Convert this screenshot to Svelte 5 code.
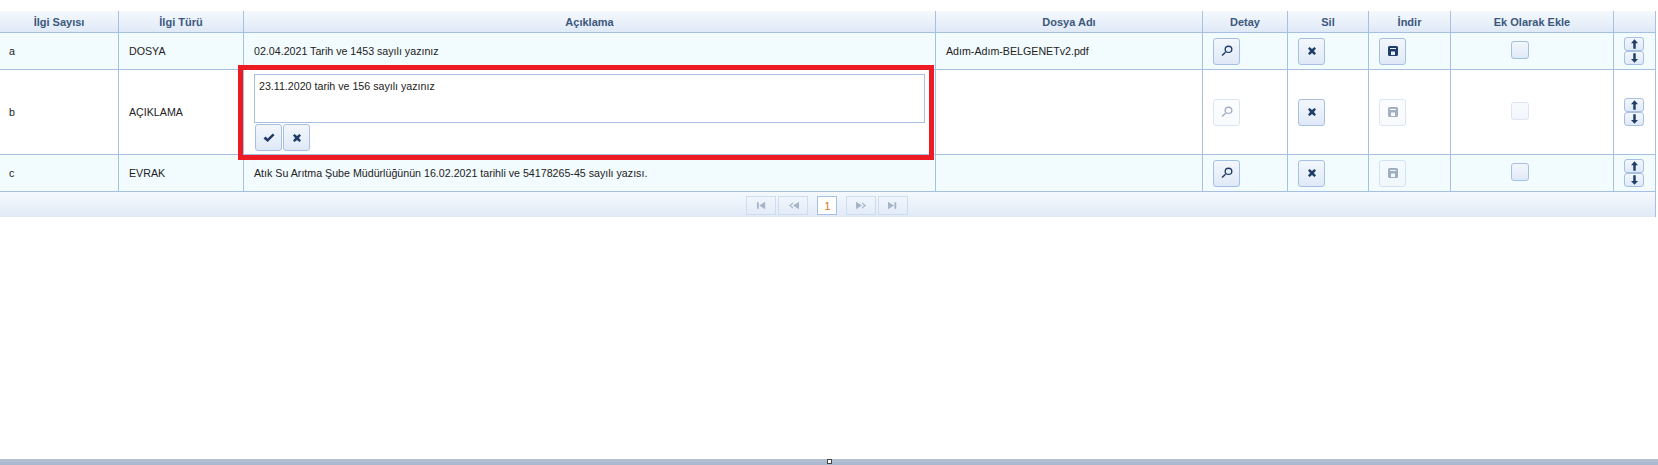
<script lang="ts">
  // grid rows; disabled flags follow what the record allows
  type Row = { no: string; type: string; desc: string; file: string; editing?: boolean; detail: boolean; download: boolean; attach: boolean };

  const columns = [
    { label: 'İlgi Sayısı', cls: 'c-no' },
    { label: 'İlgi Türü', cls: 'c-type' },
    { label: 'Açıklama', cls: 'c-desc' },
    { label: 'Dosya Adı', cls: 'c-file' },
    { label: 'Detay', cls: 'c-detail' },
    { label: 'Sil', cls: 'c-del' },
    { label: 'İndir', cls: 'c-down' },
    { label: 'Ek Olarak Ekle', cls: 'c-attach' },
    { label: '', cls: 'c-move' }
  ];

  const rows: Row[] = [
    { no: 'a', type: 'DOSYA', desc: '02.04.2021 Tarih ve 1453 sayılı yazınız', file: 'Adım-Adım-BELGENETv2.pdf', detail: true, download: true, attach: true },
    { no: 'b', type: 'AÇIKLAMA', desc: '23.11.2020 tarih ve 156 sayılı yazınız', file: '', editing: true, detail: false, download: false, attach: false },
    { no: 'c', type: 'EVRAK', desc: 'Atık Su Arıtma Şube Müdürlüğünün 16.02.2021 tarihli ve 54178265-45 sayılı yazısı.', file: '', detail: true, download: false, attach: true }
  ];

  const icons: Record<string, string> = {
    search: 'M7.5 0.5a4 3.8 0 1 0 0 7.6a4 3.8 0 0 0 0-7.6zM7.5 2a2.6 2.4 0 1 1 0 4.8a2.6 2.4 0 0 1 0-4.8zM4 6.7L5 7.8L1.6 11L0.5 10z',
    cross: 'M1.6 0L4 2L6.4 0L8 1.6L5.9 4L8 6.4L6.4 8L4 6L1.6 8L0 6.4L2.1 4L0 1.6z',
    save: 'M1.5 0h7a1.5 1.5 0 0 1 1.5 1.5v7a1.5 1.5 0 0 1-1.5 1.5h-7a1.5 1.5 0 0 1-1.5-1.5v-7a1.5 1.5 0 0 1 1.5-1.5zM2 2v1h6v-1zM3 5.5v3.5h4v-3.5z',
    check: 'M0.5 6.5L2.5 4.6L4.6 6.6L9.8 1.5L11.5 3.2L4.6 10z',
    up: 'M4 0L8 4.5H5.4V11H2.6V4.5H0z',
    down: 'M2.6 0H5.4V6.5H8L4 11L0 6.5H2.6z',
    first: 'M1 2.5h2v7H1zM3.5 6L10 2V10z',
    prev: 'M5.5 2.5L1 6L5.5 9.5V8L3 6L5.5 4zM5.5 6L12 2V10z',
    next: 'M0 2L6.5 6L0 10zM6.5 2.5L11 6L6.5 9.5V8L9 6L6.5 4z',
    last: 'M0 2L6.5 6L0 10zM7 2.5H9V9.5H7z'
  };
</script>

<div class="page">
  <table class="grid">
    <thead>
      <tr>
        {#each columns as col}
          <th class={col.cls}>{col.label}</th>
        {/each}
      </tr>
    </thead>
    <tbody>
      {#each rows as row, i}
        <tr class:odd={i % 2 === 0} class:tall={row.editing}>
          <td class="first">{row.no}</td>
          <td>{row.type}</td>
          <td class="desc">
            {#if row.editing}
              <div class="edit">
                <textarea readonly value={row.desc}></textarea>
                <div class="edit-actions">
                  <button class="btn"><svg viewBox="0 0 12 12" class="ico"><path d={icons.check} /></svg></button>
                  <button class="btn"><svg viewBox="0 0 8 8" class="ico small"><path d={icons.cross} /></svg></button>
                </div>
              </div>
              <div class="highlight"></div>
            {:else}
              {row.desc}
            {/if}
          </td>
          <td>{row.file}</td>
          <td><button class="btn" class:off={!row.detail}><svg viewBox="0 0 12 12" class="ico"><path fill-rule="evenodd" d={icons.search} /></svg></button></td>
          <td><button class="btn"><svg viewBox="0 0 8 8" class="ico small"><path d={icons.cross} /></svg></button></td>
          <td><button class="btn" class:off={!row.download}><svg viewBox="0 0 10 10" class="ico floppy"><path fill-rule="evenodd" d={icons.save} /></svg></button></td>
          <td class="attach"><span class="box" class:off={!row.attach}></span></td>
          <td>
            <div class="move">
              <button class="arrow"><svg viewBox="0 0 8 11" class="arr"><path d={icons.up} /></svg></button>
              <button class="arrow"><svg viewBox="0 0 8 11" class="arr"><path d={icons.down} /></svg></button>
            </div>
          </td>
        </tr>
      {/each}
    </tbody>
  </table>

  <div class="pager">
    <span class="pg"><svg viewBox="0 0 12 12"><path d={icons.first} /></svg></span>
    <span class="pg"><svg viewBox="0 0 12 12"><path d={icons.prev} /></svg></span>
    <span class="num">1</span>
    <span class="pg"><svg viewBox="0 0 12 12"><path d={icons.next} /></svg></span>
    <span class="pg"><svg viewBox="0 0 12 12"><path d={icons.last} /></svg></span>
  </div>

  <div class="splitter"><span class="handle"></span></div>
</div>

<style>
  :global(body) { background: #fff; }
  .page {
    height: 465px;
    display: flex;
    flex-direction: column;
    padding-top: 11px;
    box-sizing: border-box;
    overflow: hidden;
    font-family: "Liberation Sans", Arial, sans-serif;
    font-size: 10.67px;
    color: #222;
  }
  .grid {
    width: 1656px;
    table-layout: fixed;
    border-collapse: separate;
    border-spacing: 0;
  }
  .c-no { width: 119px; }
  .c-type { width: 125px; }
  .c-desc { width: 692px; }
  .c-file { width: 267px; }
  .c-detail { width: 85px; }
  .c-del { width: 81px; }
  .c-down { width: 82px; }
  .c-attach { width: 163px; }
  .c-move { width: 42px; }

  th, td {
    box-sizing: border-box;
    border-right: 1px solid #a6bfe2;
    border-bottom: 1px solid #a6bfe2;
    padding: 0 0 0 10px;
  }
  th {
    height: 22px;
    padding: 0;
    text-align: center;
    font-size: 11px;
    font-weight: bold;
    color: #3b587c;
    background: linear-gradient(#f5f9fd, #dfe9f7);
  }
  td { height: 37px; background: #fff; }
  tr.tall td { height: 85px; }
  tr.odd td { background: #f2fbfe; }
  td.first { padding-left: 9px; }
  td.desc { padding-left: 10px; position: relative; }
  tr.tall td.desc { vertical-align: top; padding-top: 4px; }

  .btn {
    width: 27px;
    height: 27px;
    padding: 0;
    display: flex;
    align-items: center;
    justify-content: center;
    border: 1px solid #a6bfe2;
    border-radius: 3px;
    background: linear-gradient(#f3f7fc, #dfe9f7);
  }
  .ico { width: 12px; height: 12px; fill: #1f3d66; }
  .ico.small { width: 8px; height: 8px; }
  .ico.floppy { width: 10px; height: 10px; }
  .btn.off { opacity: 0.4; background: linear-gradient(#f9fbfe, #eff4fb); }

  .attach { padding-left: 60px; }
  .box {
    display: block;
    width: 18px;
    height: 18px;
    box-sizing: border-box;
    margin-bottom: 2px;
    border: 1px solid #a6bfe2;
    border-radius: 3px;
    background: linear-gradient(#f3f7fc, #dfe9f7);
  }
  .box.off { opacity: 0.4; }

  .move { display: flex; flex-direction: column; }
  .arrow {
    width: 20px;
    height: 14px;
    padding: 0;
    display: flex;
    align-items: center;
    justify-content: center;
    border: 1px solid #a6bfe2;
    border-radius: 3px;
    background: linear-gradient(#f3f7fc, #dfe9f7);
  }
  .arr { width: 7px; height: 10px; fill: #1f3d66; }

  .edit { display: flex; flex-direction: column; gap: 1px; }
  textarea {
    width: 671px;
    height: 49px;
    box-sizing: border-box;
    padding: 5px 4px;
    margin: 0;
    display: block;
    resize: none;
    outline: none;
    border: 1px solid #a6bfe2;
    font: inherit;
    color: #222;
    background: #fff;
  }
  .edit-actions { display: flex; gap: 1px; margin-left: 1px; }
  .highlight {
    position: absolute;
    z-index: 1;
    left: -6px;
    top: -5px;
    right: 1px;
    bottom: -6px;
    border: 5px solid #ed1c24;
    pointer-events: none;
  }

  .pager {
    width: 1656px;
    height: 25px;
    box-sizing: border-box;
    border-right: 1px solid #a6bfe2;
    padding: 4px 0 2px 746px;
    display: flex;
    gap: 2px;
    background: linear-gradient(#f5f9fd, #e0eaf7);
  }
  .pg {
    width: 30px;
    height: 19px;
    box-sizing: border-box;
    display: flex;
    align-items: center;
    justify-content: center;
    border: 1px solid #cddcef;
  }
  .pg svg { width: 11px; height: 11px; fill: #a7b4c7; }
  .num {
    width: 20px;
    height: 19px;
    margin: 0 7px;
    padding-left: 1px;
    box-sizing: border-box;
    display: flex;
    align-items: center;
    justify-content: center;
    border: 1px solid #a6bfe2;
    background: #fff;
    color: #d9761a;
  }

  .splitter {
    margin-top: auto;
    height: 6px;
    display: flex;
    justify-content: center;
    background: linear-gradient(#b4c1d4, #a9b8cd);
  }
  .handle {
    width: 5px;
    height: 5px;
    box-sizing: border-box;
    border: 1px solid #444;
    background: #fff;
  }
</style>
